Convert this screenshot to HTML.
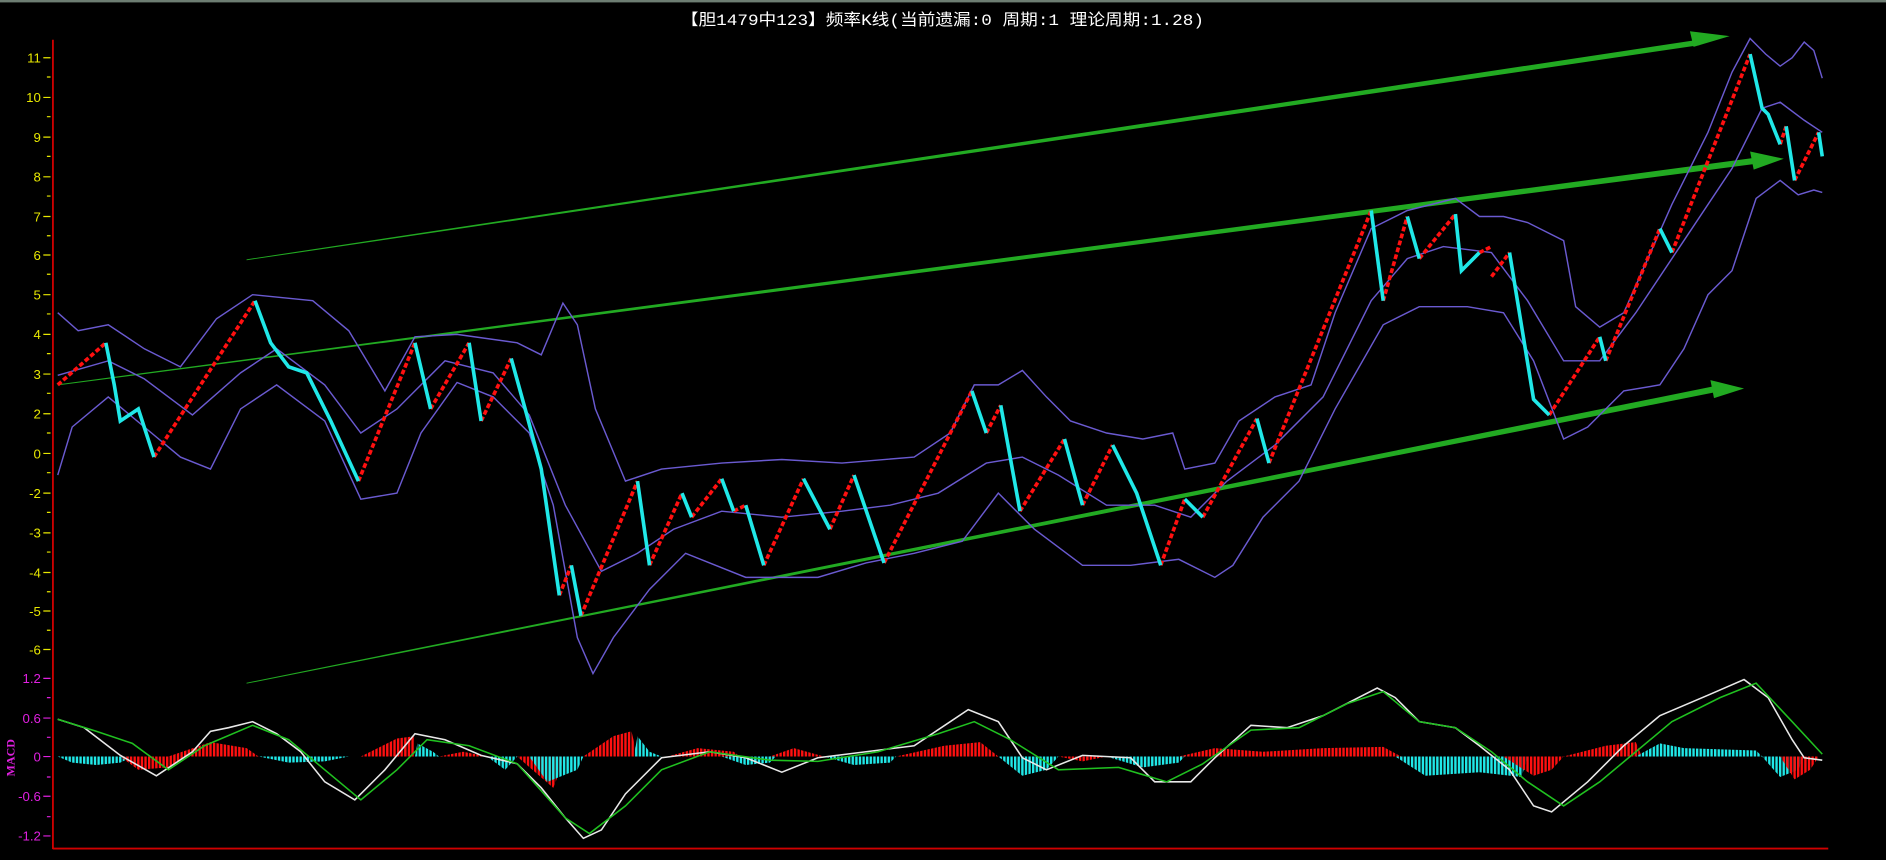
<!DOCTYPE html>
<html><head><meta charset="utf-8"><style>
html,body{margin:0;padding:0;background:#000;overflow:hidden}
svg{display:block}
</style></head><body>
<svg width="1886" height="860" viewBox="0 0 1568 715" preserveAspectRatio="none" xmlns="http://www.w3.org/2000/svg">
<defs>
<pattern id="pr" width="3" height="10" patternUnits="userSpaceOnUse"><rect width="2" height="10" fill="#ff1010"/></pattern>
<pattern id="pc" width="3" height="10" patternUnits="userSpaceOnUse"><rect width="2" height="10" fill="#20e8e8"/></pattern>
</defs>
<rect width="1568" height="715" fill="#000"/>
<rect width="1568" height="2" fill="#6d7d72"/>
<text x="566" y="21" fill="#fff" font-size="13" font-family="'Liberation Mono','Noto Sans CJK SC',monospace" textLength="435" lengthAdjust="spacingAndGlyphs">【胆1479中123】频率K线(当前遗漏:0 周期:1 理论周期:1.28)</text>

<line x1="44" y1="33" x2="44" y2="706" stroke="#d00000" stroke-width="1.5"/>
<line x1="44" y1="705.5" x2="1520" y2="705.5" stroke="#d00000" stroke-width="1.5"/>
<g fill="#e8e800" font-size="11" font-family="'Liberation Sans',sans-serif" text-anchor="end">
<text x="34" y="52">11</text><text x="34" y="85">10</text><text x="34" y="118">9</text><text x="34" y="151">8</text><text x="34" y="184">7</text><text x="34" y="216">6</text><text x="34" y="249">5</text><text x="34" y="282">4</text><text x="34" y="315">3</text><text x="34" y="348">2</text><text x="34" y="381">0</text><text x="34" y="414">-2</text><text x="34" y="447">-3</text><text x="34" y="480">-4</text><text x="34" y="512">-5</text><text x="34" y="544">-6</text>
</g>
<g stroke="#e8e800" stroke-width="1">
<path d="M36 48h6M36 81h6M36 114h6M36 147h6M36 180h6M36 212h6M36 245h6M36 278h6M36 311h6M36 344h6M36 377h6M36 410h6M36 443h6M36 476h6M36 508h6M36 540h6M39 64h3M39 97h3M39 130h3M39 163h3M39 196h3M39 228h3M39 261h3M39 294h3M39 327h3M39 360h3M39 393h3M39 426h3M39 459h3M39 492h3M39 524h3"/>
</g>
<g fill="#e020e0" font-size="11" font-family="'Liberation Sans',sans-serif" text-anchor="end">
<text x="34" y="568">1.2</text><text x="34" y="601">0.6</text><text x="34" y="633">0</text><text x="34" y="666">-0.6</text><text x="34" y="699">-1.2</text>
</g>
<g stroke="#e020e0" stroke-width="1"><path d="M36 564h6M36 597h6M36 629h6M36 662h6M36 695h6M39 580h3M39 613h3M39 646h3M39 679h3"/></g>
<text transform="translate(12,630) rotate(-90)" fill="#e020e0" font-size="10" font-weight="bold" font-family="'Liberation Serif',serif" text-anchor="middle">MACD</text>

<g fill="#22aa22">
<polygon points="205,215.6 1412,33 1413,37.5 205,216.4" />
<polygon points="1405,26 1438,30 1408,39"/>
<polygon points="48,319.6 1460,131 1461,136 48,320.4"/>
<polygon points="1455,126 1483,132 1458,141"/>
<polygon points="205,567.6 1428,320.5 1429,325.5 205,568.4"/>
<polygon points="1422,316 1450,323 1425,331"/>
</g>

<g fill="none" stroke="#6a5ad0" stroke-width="1.2">
<polyline points="48,260 65,275 90,270 120,290 150,305 180,265 210,245 260,250 290,275 320,325 345,280 380,278 430,285 450,295 468,252 480,270 495,340 520,400 550,390 600,385 650,382 700,385 760,380 790,360 810,320 830,320 850,308 870,330 890,350 920,360 950,365 975,360 985,390 1010,385 1030,350 1060,330 1090,320 1110,260 1140,190 1170,175 1210,165 1230,180 1250,180 1270,185 1300,200 1310,255 1330,272 1350,260 1390,170 1420,110 1440,60 1455,32 1468,45 1480,55 1490,48 1500,35 1508,42 1515,65"/>
<polyline points="48,312 90,300 120,315 160,345 200,310 230,290 270,320 300,360 330,340 370,300 410,310 440,345 470,420 500,475 530,460 560,440 600,425 650,430 700,425 740,420 780,410 820,385 850,380 880,395 920,420 960,420 990,430 1020,400 1060,370 1100,330 1140,250 1170,215 1200,205 1240,210 1270,250 1300,300 1330,300 1360,260 1400,200 1440,140 1465,90 1480,85 1500,100 1515,110"/>
<polyline points="48,395 60,355 90,330 120,355 150,380 175,390 200,340 230,320 270,350 300,415 330,410 350,360 380,318 410,330 440,360 460,420 480,530 493,560 510,530 540,490 570,460 620,480 680,480 720,468 760,460 800,450 830,410 860,440 900,470 940,470 980,465 1010,480 1025,470 1050,430 1080,400 1110,340 1150,270 1180,255 1220,255 1250,260 1275,300 1300,365 1320,355 1350,325 1380,320 1400,290 1420,245 1440,225 1460,165 1480,150 1495,162 1508,158 1515,160"/>
</g>

<g fill="none" stroke="#ff1010" stroke-width="3" stroke-dasharray="4 2">
<polyline points="48,320 88,285"/><polyline points="128,380 212,250"/><polyline points="298,400 345,285"/><polyline points="358,340 390,285"/><polyline points="400,350 425,298"/><polyline points="465,495 475,470"/><polyline points="483,512 530,400"/><polyline points="540,470 567,410"/><polyline points="575,430 600,398"/><polyline points="610,425 620,420"/><polyline points="635,470 668,398"/><polyline points="690,440 710,395"/><polyline points="735,468 808,325"/><polyline points="820,360 832,337"/><polyline points="848,425 885,365"/><polyline points="900,420 925,370"/><polyline points="965,470 985,415"/><polyline points="1000,430 1045,348"/><polyline points="1055,385 1140,175"/><polyline points="1150,250 1170,180"/><polyline points="1180,215 1210,178"/><polyline points="1230,210 1240,205"/><polyline points="1240,230 1255,210"/><polyline points="1288,345 1330,280"/><polyline points="1335,300 1380,190"/><polyline points="1390,210 1455,45"/><polyline points="1480,120 1485,105"/><polyline points="1492,150 1512,110"/>
</g>
<g fill="none" stroke="#20e8e8" stroke-width="3">
<polyline points="88,285 95,320 100,350 115,340 128,380"/><polyline points="212,250 225,285 240,305 255,310 275,350 298,400"/><polyline points="345,285 358,340"/><polyline points="390,285 400,350"/><polyline points="425,298 438,345 450,390 465,495"/><polyline points="475,470 483,512"/><polyline points="530,400 540,470"/><polyline points="567,410 575,430"/><polyline points="600,398 610,425"/><polyline points="620,420 635,470"/><polyline points="668,398 690,440"/><polyline points="710,395 735,468"/><polyline points="808,325 820,360"/><polyline points="832,337 848,425"/><polyline points="885,365 900,420"/><polyline points="925,370 945,410 965,470"/><polyline points="985,415 1000,430"/><polyline points="1045,348 1055,385"/><polyline points="1140,175 1150,250"/><polyline points="1170,180 1180,215"/><polyline points="1210,178 1215,225 1230,210"/><polyline points="1255,210 1275,332 1288,345"/><polyline points="1330,280 1335,300"/><polyline points="1380,190 1390,210"/><polyline points="1455,45 1465,90 1470,95 1480,120"/><polyline points="1485,105 1492,150"/><polyline points="1512,110 1515,130"/>
</g>

<g>
<polygon fill="url(#pc)" points="48,629 60,634 80,636 100,634 110,629"/>
<polygon fill="url(#pr)" points="100,629 115,640 140,638 155,629"/>
<polygon fill="url(#pr)" points="140,629 175,617 205,622 215,629"/>
<polygon fill="url(#pc)" points="215,629 240,634 270,633 290,629"/>
<polygon fill="url(#pr)" points="300,629 330,614 345,612 345,629"/>
<polygon fill="url(#pc)" points="345,629 347,618 360,625 365,629"/>
<polygon fill="url(#pr)" points="365,629 385,625 405,629"/>
<polygon fill="url(#pc)" points="405,629 420,640 430,629"/>
<polygon fill="url(#pr)" points="430,629 445,642 460,655 470,629"/>
<polygon fill="url(#pc)" points="440,629 455,650 480,640 485,629"/>
<polygon fill="url(#pr)" points="485,629 510,612 525,608 530,629"/>
<polygon fill="url(#pc)" points="527,629 530,612 540,625 550,629"/>
<polygon fill="url(#pr)" points="555,629 580,622 610,625 615,629"/>
<polygon fill="url(#pc)" points="600,629 620,636 640,634 645,629"/>
<polygon fill="url(#pr)" points="640,629 660,622 685,629"/>
<polygon fill="url(#pc)" points="685,629 710,636 740,634 745,629"/>
<polygon fill="url(#pr)" points="745,629 785,620 815,617 830,629"/>
<polygon fill="url(#pc)" points="830,629 850,645 870,640 880,629"/>
<polygon fill="url(#pr)" points="880,629 900,633 920,629"/>
<polygon fill="url(#pc)" points="920,629 950,638 980,634 985,629"/>
<polygon fill="url(#pr)" points="980,629 1010,622 1050,625 1100,622 1150,621 1165,629"/>
<polygon fill="url(#pc)" points="1160,629 1185,645 1230,642 1265,646 1270,629"/>
<polygon fill="url(#pr)" points="1250,629 1275,645 1290,640 1300,629"/>
<polygon fill="url(#pr)" points="1300,629 1335,620 1360,617 1365,629"/>
<polygon fill="url(#pc)" points="1360,629 1380,618 1400,622 1460,624 1465,629"/>
<polygon fill="url(#pc)" points="1465,629 1480,646 1495,640 1500,629"/>
<polygon fill="url(#pr)" points="1480,629 1492,648 1505,640 1512,629"/>
</g>
<g fill="none" stroke-width="1.3">
<polyline stroke="#e8e8e8" points="48,598 70,605 100,628 130,645 160,625 175,608 190,605 210,600 230,610 250,625 270,650 295,665 320,640 345,610 370,615 400,628 430,635 450,655 470,680 485,697 500,690 520,660 550,630 590,625 620,630 650,642 680,630 720,625 760,620 790,600 805,590 830,600 850,630 870,640 900,628 940,630 960,650 990,650 1010,630 1040,603 1070,605 1100,595 1145,572 1160,580 1180,600 1210,605 1230,620 1255,640 1275,670 1290,675 1320,650 1350,620 1380,595 1420,578 1450,565 1470,580 1490,615 1500,630 1515,632"/>
<polyline stroke="#20c020" points="48,598 80,608 110,618 140,640 170,620 210,603 240,615 270,640 300,665 330,640 355,615 390,620 430,635 470,680 490,693 520,670 550,640 590,625 640,632 680,633 730,625 780,610 810,600 840,615 880,640 930,638 970,650 1000,635 1040,607 1080,605 1120,585 1150,575 1180,600 1210,605 1240,625 1270,650 1300,670 1330,650 1360,625 1390,600 1430,580 1460,568 1490,600 1515,627"/>
</g>
</svg>
</body></html>
